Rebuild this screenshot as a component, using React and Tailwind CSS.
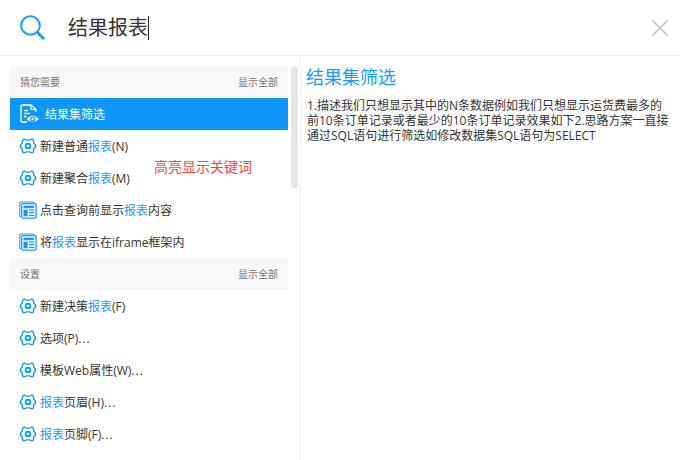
const FONT = "font-['Open_Sans','Noto_Sans_CJK_SC',sans-serif]";

const GearIcon = () => (
  <svg width="18" height="18" viewBox="0 0 18 18" fill="none" className="shrink-0 text-[#1a9bfc]">
    <path
      d="M5.2 2 L7.2 3.1 L10.8 3.1 L12.8 2 L14.6 3.4 L14.5 5.5 L16.9 9 L14.5 12.5 L14.6 14.6 L12.8 16 L10.8 14.9 L7.2 14.9 L5.2 16 L3.4 14.6 L3.5 12.5 L1.1 9 L3.5 5.5 L3.4 3.4 Z"
      stroke="currentColor"
      strokeWidth="1.4"
      strokeLinejoin="round"
    />
    <circle cx="9" cy="9" r="2.3" stroke="currentColor" strokeWidth="2" />
  </svg>
);

const PageIcon = () => (
  <svg width="18" height="18" viewBox="0 0 18 18" fill="none" className="shrink-0 text-[#1a9bfc]">
    <path d="M2 15.5 H1.5 Q0.8 15.5 0.8 14.8 V2 Q0.8 1 1.8 1 H14 Q15 1 15 2 V2.5" stroke="currentColor" strokeWidth="1.1" />
    <rect x="2.7" y="2.7" width="14.4" height="14.4" rx="1" stroke="currentColor" strokeWidth="1.3" />
    <rect x="4.5" y="4.6" width="10.8" height="2.6" fill="currentColor" />
    <rect x="4.5" y="8.5" width="4.2" height="6.8" fill="currentColor" />
    <path d="M10 9.1 H15.3 M10 11.7 H15.3 M10 14.4 H15.3" stroke="currentColor" strokeWidth="1.2" />
  </svg>
);

const ResultIcon = () => (
  <svg width="20" height="20" viewBox="0 0 20 20" fill="none" className="shrink-0 text-white">
    <path
      d="M7 18 H2.5 Q1 18 1 16.5 V2.5 Q1 1 2.5 1 H11 L16 5.5 V8"
      stroke="currentColor"
      strokeWidth="1.3"
      strokeLinejoin="round"
    />
    <path d="M11 1.5 V5.5 H15.5" stroke="currentColor" strokeWidth="1.2" />
    <path d="M4 6.5 H8 M4 9.5 H10 M4 12.5 H6.5" stroke="currentColor" strokeWidth="1.3" />
    <path d="M6.5 15 Q12.5 8.5 19 15 Q12.5 21 6.5 15 Z" fill="currentColor" />
    <circle cx="12.8" cy="15" r="2.6" fill="#0f96fa" />
    <circle cx="12.8" cy="15" r="1.3" fill="currentColor" />
  </svg>
);

const Mark = ({ children }) => <span className="text-[#1a9bfc]">{children}</span>;

const Dots = () => <span className="tracking-[1px]">...</span>;

const SectionHead = ({ title }) => (
  <div className="h-8 flex items-center justify-between bg-[#f8f8f8] pl-2.5 pr-2.5 pt-px text-[10px] text-[#757575]">
    <span>{title}</span>
    <span>显示全部</span>
  </div>
);

const Row = ({ icon, children }) => (
  <div className="h-8 flex items-center gap-[3px] pl-[9px] text-xs text-[#333333]">
    {icon}
    <span className="pt-px">{children}</span>
  </div>
);

export default function App() {
  return (
    <div className={`w-[680px] h-[460px] overflow-hidden bg-white flex flex-col ${FONT}`}>
      <div className="h-14 shrink-0 flex items-center border-b border-[#f0f0f0] pl-5 pr-[10px]">
        <svg width="25" height="25" viewBox="0 0 25 25" fill="none" className="shrink-0 text-[#1a9bfc]">
          <circle cx="10.5" cy="10.5" r="9.3" stroke="currentColor" strokeWidth="2" />
          <path d="M17.6 17.6 L23.2 23.2" stroke="currentColor" strokeWidth="3" strokeLinecap="round" />
        </svg>
        <div className="ml-[23px] flex items-center text-xl text-[#333333]">
          结果报表
          <span className="w-px h-6 bg-[#222222]" />
        </div>
        <svg width="16" height="16" viewBox="0 0 16 16" fill="none" className="ml-auto mr-[2px] text-[#c4c4c4]">
          <path d="M0.5 0.5 L15.5 15.5 M15.5 0.5 L0.5 15.5" stroke="currentColor" strokeWidth="1.7" />
        </svg>
      </div>
      <div className="flex-1 min-h-0 flex">
        <div className="relative w-[301px] shrink-0 flex border-r border-[#f0f0f0] pl-2.5 pt-2.5">
          <div className="w-[278px] shrink-0">
            <SectionHead title="猜您需要" />
            <div className="h-8 flex items-center gap-[5px] bg-[#0f96fa] pl-2.5 text-xs text-white">
              <ResultIcon />
              <span className="pt-px">结果集筛选</span>
            </div>
            <Row icon={<GearIcon />}>新建普通<Mark>报表</Mark>(N)</Row>
            <Row icon={<GearIcon />}>新建聚合<Mark>报表</Mark>(M)</Row>
            <Row icon={<PageIcon />}>点击查询前显示<Mark>报表</Mark>内容</Row>
            <Row icon={<PageIcon />}>将<Mark>报表</Mark>显示在iframe框架内</Row>
            <SectionHead title="设置" />
            <Row icon={<GearIcon />}>新建决策<Mark>报表</Mark>(F)</Row>
            <Row icon={<GearIcon />}>选项(P)<Dots /></Row>
            <Row icon={<GearIcon />}>模板Web属性(W)<Dots /></Row>
            <Row icon={<GearIcon />}><Mark>报表</Mark>页眉(H)<Dots /></Row>
            <Row icon={<GearIcon />}><Mark>报表</Mark>页脚(F)<Dots /></Row>
          </div>
          <div className="ml-[3px] w-[7px] h-[122px] rounded-full bg-[#e6e6e6]" />
          <span className="absolute left-[154px] top-[101px] text-sm text-[#f5443c]">高亮显示关键词</span>
        </div>
        <div className="flex-1 min-w-0 pl-[6px] pr-2 pt-[9px]">
          <h2 className="-ml-px text-lg leading-6 font-normal text-[#1a9bfc]">结果集筛选</h2>
          <p className="mt-[9px] text-xs leading-[15px] text-[#333333]">
            1.描述我们只想显示其中的N条数据例如我们只想显示运货费最多的前10条订单记录或者最少的10条订单记录效果如下2.思路方案一直接通过SQL语句进行筛选如修改数据集SQL语句为SELECT
          </p>
        </div>
      </div>
    </div>
  );
}
